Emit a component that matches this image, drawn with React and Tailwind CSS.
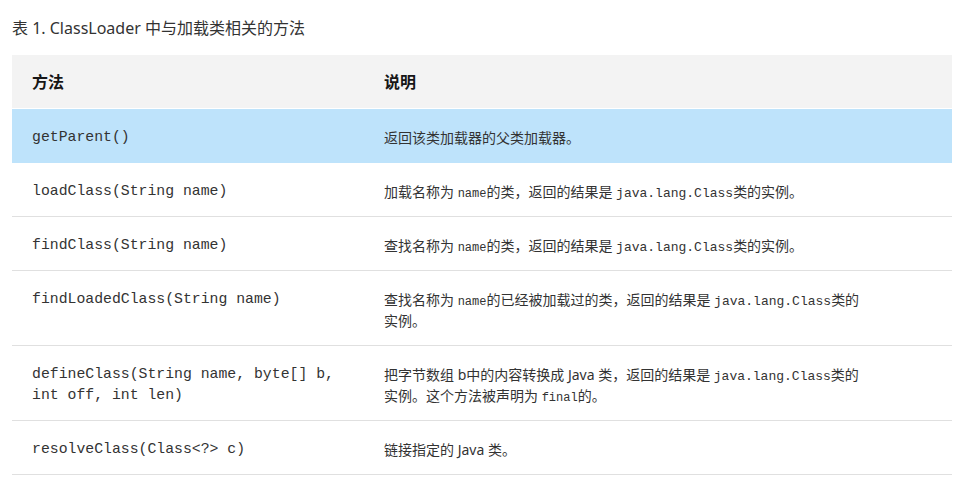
import React from 'react';

const mono = "font-['Liberation_Mono','DejaVu_Sans_Mono',monospace]";

const C = ({ children, size = 'text-[13px]' }) => (
  <span className={`${mono} ${size} leading-none`}>{children}</span>
);

const rows = [
  {
    method: 'getParent()',
    desc: <>返回该类加载器的父类加载器。</>,
    active: true,
  },
  {
    method: 'loadClass(String name)',
    desc: <>加载名称为 <C size="text-[12px]">name</C>的类，返回的结果是 <C>java.lang.Class</C>类的实例。</>,
  },
  {
    method: 'findClass(String name)',
    desc: <>查找名称为 <C size="text-[12px]">name</C>的类，返回的结果是 <C>java.lang.Class</C>类的实例。</>,
  },
  {
    method: 'findLoadedClass(String name)',
    desc: <>查找名称为 <C size="text-[12px]">name</C>的已经被加载过的类，返回的结果是 <C>java.lang.Class</C>类的<br />实例。</>,
  },
  {
    method: <>defineClass(String name, byte[] b,<br />int off, int len)</>,
    desc: <>把字节数组 b中的内容转换成 Java 类，返回的结果是 <C>java.lang.Class</C>类的<br />实例。这个方法被声明为 <C size="text-[12px]">final</C>的。</>,
  },
  {
    method: 'resolveClass(Class<?> c)',
    desc: <>链接指定的 Java 类。</>,
  },
];

export default function App() {
  return (
    <div className="w-[969px] h-[484px] bg-white px-3 pt-[16px] text-[#161616] font-['Noto_Sans','Noto_Sans_CJK_SC',sans-serif] overflow-hidden">
      <p className="text-[16px] leading-[24px] text-[#333] mb-[15px]">表 1. ClassLoader 中与加载类相关的方法</p>
      <div className="w-[940px]">
        <div className="flex bg-[#f3f3f3] border-b border-white text-[16px] font-bold leading-[21px]">
          <div className="w-[352px] px-5 pt-[17px] pb-[15px]">方法</div>
          <div className="flex-1 px-5 pt-[17px] pb-[15px]">说明</div>
        </div>
        {rows.map((r, i) => (
          <div
            key={i}
            className={`flex border-b text-[14px] leading-[21px] ${r.active ? 'bg-[#bee3fb] border-[#bee3fb]' : 'border-[#e0e0e0]'}`}
          >
            <div className={`w-[352px] px-5 pt-[18px] pb-[14px] ${mono} text-[14.8px] text-[#333]`}>{r.method}</div>
            <div className="flex-1 px-5 pt-[18px] pb-[14px] text-[#333]">{r.desc}</div>
          </div>
        ))}
      </div>
    </div>
  );
}
